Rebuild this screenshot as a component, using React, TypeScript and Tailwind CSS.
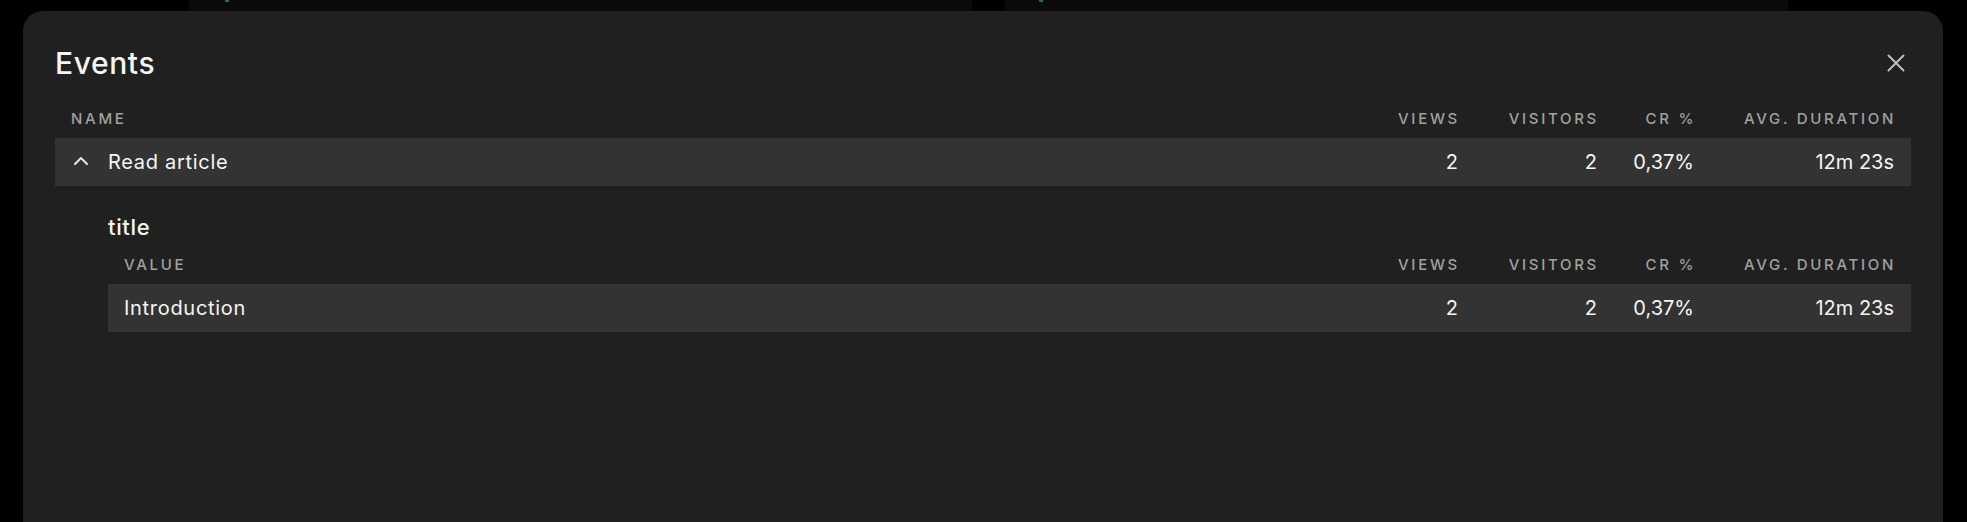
import { ReactNode } from "react";

type Row = {
  name: string;
  views: string;
  visitors: string;
  cr: string;
  duration: string;
};

const FONT = "font-['Inter','Liberation_Sans',sans-serif]";

function HeaderRow({ first }: { first: string }) {
  return (
    <div className="flex items-center h-[28px] pl-[16px] pr-[15px] text-[15px] font-medium uppercase tracking-[0.18em] text-[#a1a1a1]">
      <div className="flex-1">{first}</div>
      <div className="w-[100px] text-right">Views</div>
      <div className="w-[139px] text-right">Visitors</div>
      <div className="w-[97px] text-right">CR %</div>
      <div className="w-[200px] text-right">Avg. Duration</div>
    </div>
  );
}

function DataRow({ row, icon }: { row: Row; icon?: ReactNode }) {
  return (
    <div
      className={`flex items-center h-[48px] bg-[#333333] pr-[17px] text-[20px] text-[#f5f5f5] ${
        icon ? "pl-[14px]" : "pl-[16px]"
      }`}
    >
      <div className="flex-1 flex items-center gap-[15px]">
        {icon}
        <span className="tracking-[0.035em]">{row.name}</span>
      </div>
      <div className="w-[100px] text-right">{row.views}</div>
      <div className="w-[139px] text-right">{row.visitors}</div>
      <div className="w-[97px] text-right">{row.cr}</div>
      <div className="w-[200px] text-right">{row.duration}</div>
    </div>
  );
}

function ChevronUp() {
  return (
    <svg
      width="24"
      height="24"
      viewBox="0 0 24 24"
      fill="none"
      stroke="#e5e5e5"
      strokeWidth="2"
      strokeLinecap="round"
      strokeLinejoin="round"
      className="-mt-[3px]"
    >
      <path d="m18 15-6-6-6 6" />
    </svg>
  );
}

export default function App() {
  const event: Row = {
    name: "Read article",
    views: "2",
    visitors: "2",
    cr: "0,37%",
    duration: "12m 23s",
  };
  const prop: Row = {
    name: "Introduction",
    views: "2",
    visitors: "2",
    cr: "0,37%",
    duration: "12m 23s",
  };

  return (
    <div className={`relative h-[522px] w-full overflow-hidden bg-black ${FONT}`}>
      {/* page behind the modal */}
      <div className="flex gap-[33px] pl-[189px]">
        <div className="w-[783px] h-[40px] bg-[#0a0a0a] pl-[36px]">
          <div className="w-[4px] h-[2px] bg-[#1f6f4a]" />
        </div>
        <div className="w-[783px] h-[40px] bg-[#0a0a0a] pl-[34px]">
          <div className="w-[4px] h-[2px] bg-[#1f6f4a]" />
        </div>
      </div>

      {/* modal */}
      <div className="absolute top-[11px] left-[23px] w-[1920px] h-[600px] rounded-[20px] bg-[#202020] p-8">
        <div className="flex items-center justify-between h-[40px]">
          <h2 className="text-[30px] leading-[40px] font-medium tracking-[0.02em] text-[#f5f5f5]">
            Events
          </h2>
          <button className="w-[30px] h-[30px] flex items-center justify-center text-[#bdbdbd]">
            <svg
              width="30"
              height="30"
              viewBox="0 0 24 24"
              fill="none"
              stroke="currentColor"
              strokeWidth="1.6"
              strokeLinecap="round"
              strokeLinejoin="round"
            >
              <path d="M6 18 18 6M6 6l12 12" />
            </svg>
          </button>
        </div>

        <div className="mt-[22px]">
          <HeaderRow first="Name" />
          <div className="mt-[5px]">
            <DataRow row={event} icon={<ChevronUp />} />
          </div>
        </div>

        {/* breakdown by property */}
        <div className="ml-[53px] mt-[27px]">
          <div className="text-[22px] leading-[28px] font-medium tracking-[0.03em] text-[#f5f5f5]">
            title
          </div>
          <div className="mt-[10px]">
            <HeaderRow first="Value" />
            <div className="mt-[5px]">
              <DataRow row={prop} />
            </div>
          </div>
        </div>
      </div>
    </div>
  );
}
